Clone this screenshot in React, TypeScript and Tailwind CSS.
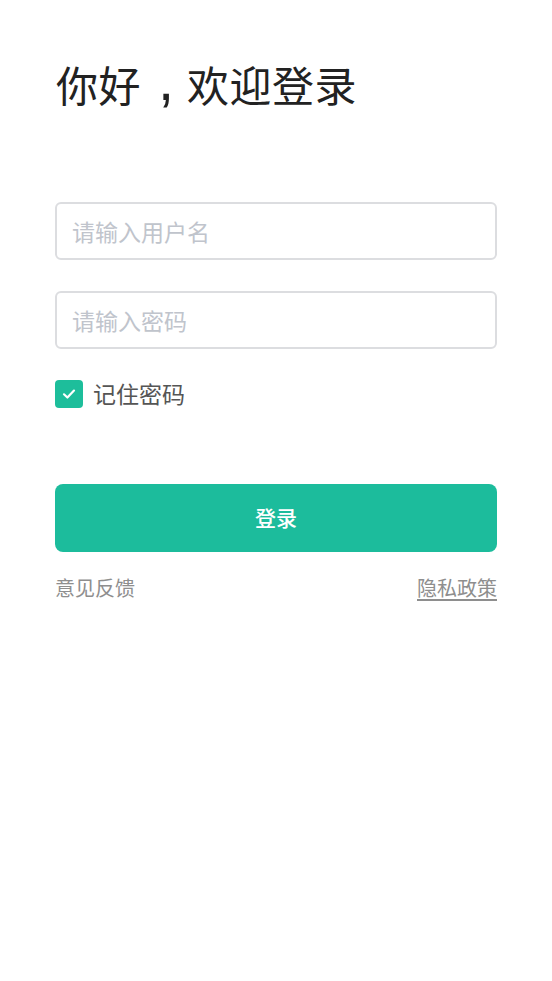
import React from "react";

export default function App() {
  return (
    <div
      className="w-[552px] h-[981px] bg-white px-[55px] flex flex-col"
      style={{ fontFamily: '"Noto Sans CJK SC", "Noto Sans", sans-serif' }}
    >
      <h1 className="mt-[58px] h-[48px] text-[42px] leading-[48px] text-[#222222] font-normal pl-px tracking-[0.5px] flex items-baseline">
        <span>你好</span>
        <span
          className="inline-block w-[46px] pl-[17px] text-[58px] leading-[48px] -translate-y-[2px]"
          style={{ fontFamily: '"Liberation Sans", sans-serif' }}
        >
          ,
        </span>
        <span>欢迎登录</span>
      </h1>
      <div className="mt-[96px] flex flex-col gap-[31px]">
        <div className="h-[58px] border-2 border-[#dcdde0] rounded-[6px] flex items-center px-[15px]">
          <span className="text-[23px] text-[#c0c4cc]">请输入用户名</span>
        </div>
        <div className="h-[58px] border-2 border-[#dcdde0] rounded-[6px] flex items-center px-[15px]">
          <span className="text-[23px] text-[#c0c4cc]">请输入密码</span>
        </div>
      </div>
      <div className="mt-[31px] h-[28px] flex items-center gap-[10px]">
        <div className="w-[28px] h-[28px] rounded-[4px] bg-[#1dbe9b] flex items-center justify-center">
          <svg width="16" height="16" viewBox="0 0 16 16" fill="none">
            <path d="M3 8.3 L6.4 11.5 L13 4.6" stroke="white" strokeWidth="2.2" strokeLinecap="round" strokeLinejoin="round" />
          </svg>
        </div>
        <span className="text-[23px] leading-[28px] text-[#555555] -translate-y-[1px]">记住密码</span>
      </div>
      <button className="mt-[76px] h-[68px] rounded-[8px] bg-[#1cbc9c] text-white text-[21px] font-medium flex items-center justify-center">
        登录
      </button>
      <div className="mt-[21px] flex justify-between items-center text-[20px] text-[#8e8e8e]">
        <span>意见反馈</span>
        <span className="underline underline-offset-[3px]">隐私政策</span>
      </div>
    </div>
  );
}
